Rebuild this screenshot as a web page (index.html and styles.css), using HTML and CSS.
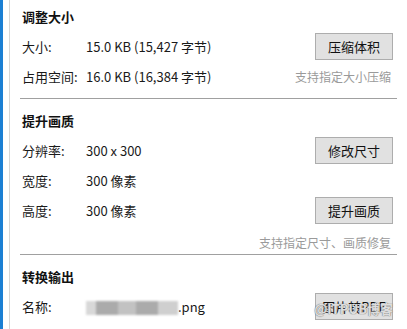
FILE: index.html
```html
<!DOCTYPE html>
<html lang="zh-CN">
<head>
  <meta charset="UTF-8" />
  <title>属性</title>
  <link rel="stylesheet" href="styles.css">
</head>
<body>
  <div class="frame">
    <div class="panel">

      <div class="section">
        <h3>调整大小</h3>
        <div class="row">
          <span class="label">大小:</span>
          <span class="value">15.0 KB (15,427 字节)</span>
          <button class="btn">压缩体积</button>
        </div>
        <div class="row">
          <span class="label">占用空间:</span>
          <span class="value">16.0 KB (16,384 字节)</span>
          <span class="hint">支持指定大小压缩</span>
        </div>
      </div>

      <div class="section">
        <h3>提升画质</h3>
        <div class="row">
          <span class="label">分辨率:</span>
          <span class="value">300 x 300</span>
          <button class="btn">修改尺寸</button>
        </div>
        <div class="row">
          <span class="label">宽度:</span>
          <span class="value">300 像素</span>
        </div>
        <div class="row">
          <span class="label">高度:</span>
          <span class="value">300 像素</span>
          <button class="btn">提升画质</button>
        </div>
        <div class="row hint-row">
          <span class="hint">支持指定尺寸、画质修复</span>
        </div>
      </div>

      <div class="section last">
        <h3>转换输出</h3>
        <div class="row">
          <span class="label">名称:</span>
          <span class="value">
            <span class="blurred">
              <i class="b1"></i><i class="b2"></i><i class="b3"></i><i class="b2"></i><i class="b4"></i>
            </span>.png
          </span>
          <button class="btn">图片转PDF</button>
        </div>
        <span class="watermark">@ITPUB博客</span>
      </div>

    </div>
  </div>
</body>
</html>
```

FILE: styles.css
```css
html, body {
  margin: 0;
  padding: 0;
}

body {
  width: 407px;
  height: 329px;
  overflow: hidden;
  background: #fff;
  font-family: "Noto Sans CJK SC", "Noto Sans", sans-serif;
  font-size: 13px;
  color: #1a1a1a;
}

/* blue strip + thin grey line on the left */
.frame {
  height: 100%;
  border-left: 3px solid #1b7fd3;
  padding-left: 6px;
  box-sizing: border-box;
}

.panel {
  height: 100%;
  border-left: 1px solid #d6d6d6;
  padding: 0 10px 0 10px;
}

.section {
  position: relative;
  border-bottom: 1px solid #a0a0a0;
  padding: 7px 0 7px 0;
}

.section + .section {
  padding-top: 12px;
  padding-bottom: 3px;
}

.section.last {
  border-bottom: none;
  padding-top: 12px;
}

h3 {
  margin: 0 0 4px 2px;
  font-size: 13px;
  font-weight: bold;
  line-height: 20px;
  color: #111;
}

.row {
  display: flex;
  align-items: center;
  height: 30px;
  padding-right: 4px;
}

.label {
  width: 64px;
  padding-left: 2px;
  color: #1a1a1a;
}

.value {
  flex: 1;
  color: #1a1a1a;
}

.btn {
  width: 78px;
  height: 27px;
  border: 1px solid #adadad;
  background: #e1e1e1;
  font-family: inherit;
  font-size: 13px;
  color: #111;
  padding: 0;
}

.hint {
  color: #9a9a9a;
  font-size: 12px;
  margin-left: auto;
  padding-right: 2px;
}

.hint-row {
  height: 26px;
  align-items: flex-end;
}

.blurred {
  display: inline-flex;
  vertical-align: middle;
  filter: blur(1.2px);
}

.blurred i {
  display: block;
  height: 14px;
}

.b1 { width: 10px; background: #d8d8d8; }
.b2 { width: 22px; background: #ababab; }
.b3 { width: 18px; background: #c2c2c2; }
.b4 { width: 20px; background: #cfcfcf; }

.watermark {
  position: absolute;
  right: 4px;
  bottom: 6px;
  font-size: 13px;
  font-weight: bold;
  color: rgba(255, 255, 255, 0.75);
  text-shadow: 0 0 1px #777, 0 0 1px #777;
}
```
